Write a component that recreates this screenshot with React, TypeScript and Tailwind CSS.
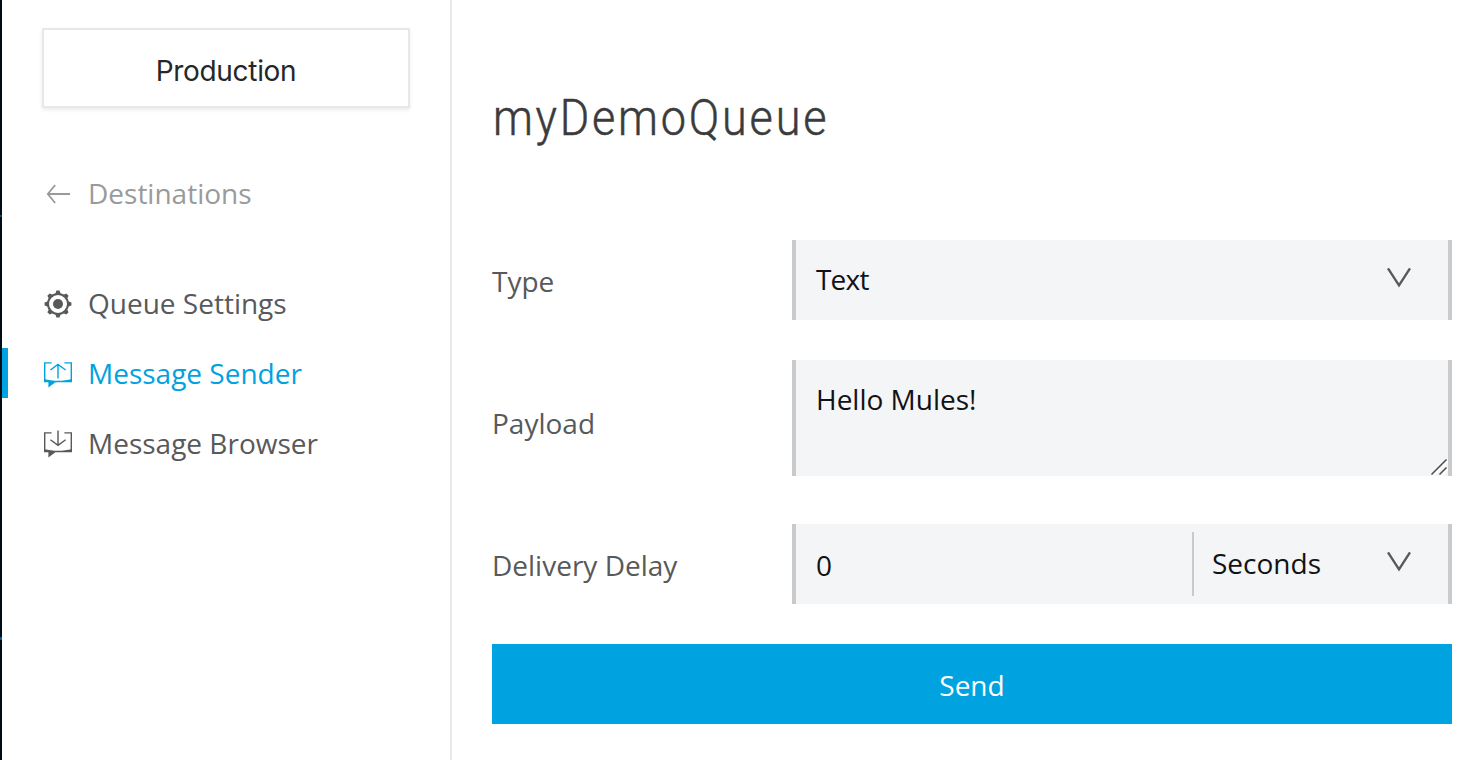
import type { ReactNode } from "react";

function ArrowLeftIcon() {
  return (
    <svg width="28" height="28" viewBox="0 0 28 28" fill="none" stroke="currentColor" strokeWidth="1.8">
      <path d="M26 14H3.6M11.2 5L3.8 14L11.2 23" />
    </svg>
  );
}

function GearIcon() {
  const teeth = [0, 45, 90, 135, 180, 225, 270, 315];
  return (
    <svg width="28" height="28" viewBox="0 0 28 28" className="mt-[2px]">
      <circle cx="14" cy="14" r="10" fill="none" stroke="currentColor" strokeWidth="2" />
      <circle cx="14" cy="14" r="5" fill="currentColor" />
      {teeth.map((angle) => (
        <path
          key={angle}
          d="M11.2 4.2L12.4 0.6H15.6L16.8 4.2Z"
          fill="currentColor"
          transform={`rotate(${angle} 14 14)`}
        />
      ))}
    </svg>
  );
}

function MessageFrame({ children }: { children: ReactNode }) {
  return (
    <svg width="28" height="28" viewBox="0 0 28 28" fill="none" stroke="currentColor" className="mt-[2px]">
      <path d="M7.6 2.9H0.7V20.5M20.4 2.9H27.3V20.5" strokeWidth="1.4" />
      <path
        d="M0 19C9 21.4 19 21.4 28 19V22.3H11.4L4.4 27.6V22.3H0Z"
        fill="currentColor"
        stroke="none"
      />
      {children}
    </svg>
  );
}

function SenderIcon() {
  return (
    <MessageFrame>
      <path d="M14 18.6V4.4M6.4 10L14 4.4L21.6 10" strokeWidth="1.4" />
    </MessageFrame>
  );
}

function BrowserIcon() {
  return (
    <MessageFrame>
      <path d="M14 0.4V15.4M6.4 9.8L14 15.4L21.6 9.8" strokeWidth="1.4" />
    </MessageFrame>
  );
}

function ChevronIcon() {
  return (
    <svg width="24" height="20" viewBox="0 0 24 20" fill="none" stroke="#58595a" strokeWidth="2.4" className="mb-[2px]">
      <path d="M1 0.4L12 17.4L23 0.4" />
    </svg>
  );
}

function NavItem({ icon, label, active = false }: { icon: ReactNode; label: string; active?: boolean }) {
  return (
    <a
      className={
        active
          ? "flex h-[50px] items-center gap-4 border-l-[6px] border-[#00a2df] pl-9 text-[#00a2df]"
          : "flex h-[50px] items-center gap-4 border-l-[6px] border-transparent pl-9 text-[#58595a]"
      }
    >
      {icon}
      <span>{label}</span>
    </a>
  );
}

export default function App() {
  return (
    <div className="flex h-[760px] w-full overflow-hidden bg-white font-['Open_Sans',sans-serif] text-[28px] leading-[38px] text-[#58595a]">
      <div className="flex w-[2px] shrink-0 flex-col bg-[#000c18]">
        <div className="mt-[215px] h-[2px] bg-[#0b4a5e]" />
        <div className="mt-[420px] h-[3px] bg-[#075a94]" />
      </div>

      <aside className="w-[450px] shrink-0 border-r-2 border-[#e8e9ea]">
        <button className="mt-7 ml-10 flex h-20 w-[368px] items-center justify-center border-2 border-[#e8e8e9] bg-white pt-[5px] font-['Inter',sans-serif] text-[28px] tracking-[-0.3px] text-[#262728] shadow-[0_2px_4px_rgba(0,0,0,0.08)]">
          Production
        </button>
        <a className="mt-[61px] flex h-[50px] items-center gap-4 pl-[42px] text-[#999a9b]">
          <ArrowLeftIcon />
          <span className="pb-[2px]">Destinations</span>
        </a>
        <nav className="mt-[59px] flex flex-col gap-5">
          <NavItem icon={<GearIcon />} label="Queue Settings" />
          <NavItem icon={<SenderIcon />} label="Message Sender" active />
          <NavItem icon={<BrowserIcon />} label="Message Browser" />
        </nav>
      </aside>

      <main className="flex-1 pr-[30px] pl-10">
        <h1 className="mt-[85px] h-[155px] w-[400px] origin-left scale-x-90 pl-px font-['Roboto',sans-serif] text-[50px] leading-[66px] font-light tracking-[3.1px] text-[#3a3b3c] [-webkit-text-stroke:0.5px_#3a3b3c]">
          myDemoQueue
        </h1>
        <form className="flex flex-col">
          <div className="flex h-20 items-center">
            <label className="w-[300px] pt-[2px]">Type</label>
            <div className="flex h-20 flex-1 items-center justify-between border-x-4 border-[#c9cacb] bg-[#f4f5f7] pr-[37px] pb-[2px] pl-5 text-[#111214]">
              <span className="tracking-[-0.8px]">Text</span>
              <ChevronIcon />
            </div>
          </div>
          <div className="mt-10 flex h-[116px] items-center">
            <label className="w-[300px] pt-[10px]">Payload</label>
            <div className="relative h-[116px] flex-1 border-x-4 border-[#c9cacb] bg-[#f4f5f7] pt-5 pl-5 text-[#111214]">
              Hello Mules!
              <svg className="absolute right-0 bottom-0" width="18" height="18" viewBox="0 0 18 18" fill="none">
                <path d="M3.5 17.5L18 3M11.5 17.5L18 11" stroke="#fff" strokeWidth="1.5" />
                <path d="M1.5 16.5L16.5 1.5M9.5 16.5L16.5 9.5" stroke="#4b4b4b" strokeWidth="1.5" />
              </svg>
            </div>
          </div>
          <div className="mt-12 flex h-20 items-center">
            <label className="w-[300px] pt-[2px]">Delivery Delay</label>
            <div className="flex h-20 flex-1 items-center border-x-4 border-[#c9cacb] bg-[#f4f5f7] text-[#111214]">
              <span className="w-[396px] pt-[2px] pl-5">0</span>
              <div className="flex h-16 flex-1 items-center justify-between border-l-2 border-[#c9cacb] pr-[37px] pb-[2px] pl-[18px]">
                <span>Seconds</span>
                <ChevronIcon />
              </div>
            </div>
          </div>
          <button type="button" className="mt-10 h-20 bg-[#00a2df] pt-[2px] text-white">
            Send
          </button>
        </form>
      </main>
    </div>
  );
}
